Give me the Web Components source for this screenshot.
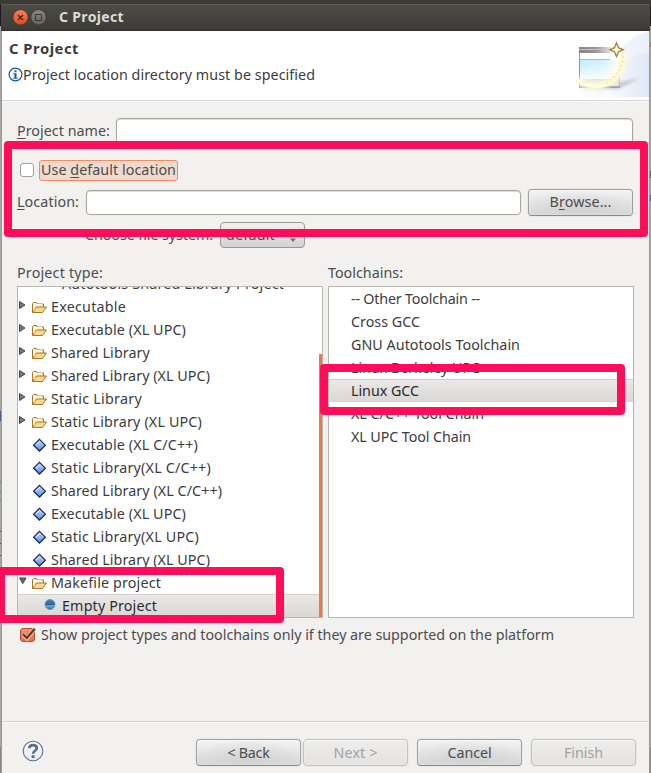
<!DOCTYPE html>
<html lang="en">
<head>
<meta charset="utf-8">
<title>C Project</title>
<style>
html,body{margin:0;padding:0}
body{width:651px;height:773px;overflow:hidden;background:#aaa9a7;font:14.3px/22px "Noto Sans","Open Sans",sans-serif;color:#4c4c4c}
</style>
</head>
<body>
<project-dialog></project-dialog>
<script>
const define = (name, html, after) => customElements.define(name, class extends HTMLElement {
  constructor(){ super(); this.attachShadow({mode:'open'}).innerHTML = html; }
  connectedCallback(){ if (after) after.call(this, this.shadowRoot); }
});

define('project-dialog', `
<style>
:host{display:block;position:relative;width:651px;height:773px;overflow:hidden;background:linear-gradient(#3c3b37 0 4px,#1c1b1a 4px 26px,#a5a4a2 26px 747px,#8b8986 747px)}
.window{display:flex;flex-direction:column;height:773px;margin:0 2px;background:#f2f1f0;box-shadow:0 0 0 1px #9b9a98}
.content{display:flex;flex-direction:column;height:620px;padding:17px 16px 0 15px;box-sizing:border-box}
.row{display:flex;align-items:center}
.name{height:26px;justify-content:space-between}
.default{height:22px;margin:15px 0 0 3px;gap:5px}
.loc{height:28px;margin-top:7px}
.loc text-field{margin:0 7px 0 7px}
.fs{height:26px;margin:6px 0 0 68px;gap:7px}
.titles{display:grid;grid-template-columns:311px 1fr;height:22px;margin-top:14px}
.lists{display:grid;grid-template-columns:306px 306px;gap:5px;height:332px;margin-top:2px}
.check{height:22px;margin:6px 0 0 3px;gap:6px}
.footer{display:flex;height:52px;border-top:1px solid #d7d5d3;box-shadow:inset 0 1px #fbfbfa;box-sizing:border-box;padding:17px 13px 0 20px}
.footer svg{margin:1px 152px 0 0;flex:none}
.edge{position:absolute;width:1px;opacity:.7}
</style>
<div class="window">
<title-bar><fit-text w="65">C Project</fit-text></title-bar>
<dialog-header><fit-text slot="title" w="70">C Project</fit-text><fit-text w="292">Project location directory must be specified</fit-text></dialog-header>
<div class="content">
 <div class="row name"><fit-text w="93"><u>P</u>roject name:</fit-text><text-field style="width:517px;height:26px"></text-field></div>
 <div class="row default"><check-box></check-box><focus-label><fit-text w="135">Use <u>d</u>efault location</fit-text></focus-label></div>
 <div class="row loc"><fit-text w="62"><u>L</u>ocation:</fit-text><text-field style="width:435px;height:25px"></text-field><push-button><fit-text w="62">B<u>r</u>owse...</fit-text></push-button></div>
 <div class="row fs"><fit-text w="128">Choose file system:</fit-text><drop-down><fit-text w="49">default</fit-text></drop-down></div>
 <div class="titles"><fit-text w="86">Project type:</fit-text><fit-text w="75">Toolchains:</fit-text></div>
 <div class="lists">
  <list-box class="tree" end scroll>
   <tree-item level="2" kind="none"><fit-text w="222">Autotools Shared Library Project</fit-text></tree-item>
   <tree-item kind="folder" arrow="right"><fit-text w="75">Executable</fit-text></tree-item>
   <tree-item kind="folder" arrow="right"><fit-text w="135">Executable (XL UPC)</fit-text></tree-item>
   <tree-item kind="folder" arrow="right"><fit-text w="99">Shared Library</fit-text></tree-item>
   <tree-item kind="folder" arrow="right"><fit-text w="159">Shared Library (XL UPC)</fit-text></tree-item>
   <tree-item kind="folder" arrow="right"><fit-text w="91">Static Library</fit-text></tree-item>
   <tree-item kind="folder" arrow="right"><fit-text w="151">Static Library (XL UPC)</fit-text></tree-item>
   <tree-item kind="diamond"><fit-text w="147">Executable (XL C/C++)</fit-text></tree-item>
   <tree-item kind="diamond"><fit-text w="160">Static Library(XL C/C++)</fit-text></tree-item>
   <tree-item kind="diamond"><fit-text w="171">Shared Library (XL C/C++)</fit-text></tree-item>
   <tree-item kind="diamond"><fit-text w="135">Executable (XL UPC)</fit-text></tree-item>
   <tree-item kind="diamond"><fit-text w="148">Static Library(XL UPC)</fit-text></tree-item>
   <tree-item kind="diamond"><fit-text w="159">Shared Library (XL UPC)</fit-text></tree-item>
   <tree-item kind="folder" arrow="down"><fit-text w="110">Makefile project</fit-text></tree-item>
   <tree-item level="2" kind="ball" selected><fit-text w="95">Empty Project</fit-text></tree-item>
  </list-box>
  <list-box>
   <list-item><fit-text w="129">-- Other Toolchain --</fit-text></list-item>
   <list-item><fit-text w="69">Cross GCC</fit-text></list-item>
   <list-item><fit-text w="169">GNU Autotools Toolchain</fit-text></list-item>
   <list-item><fit-text w="129">Linux Berkeley UPC</fit-text></list-item>
   <list-item selected><fit-text w="68">Linux GCC</fit-text></list-item>
   <list-item><fit-text w="133">XL C/C++ Tool Chain</fit-text></list-item>
   <list-item><fit-text w="120">XL UPC Tool Chain</fit-text></list-item>
  </list-box>
 </div>
 <div class="row check"><check-box checked></check-box><fit-text w="513">Show project types and toolchains only if they are supported on the platform</fit-text></div>
</div>
<div class="footer">
 <svg width="22" height="22" viewBox="0 0 22 22"><defs><linearGradient id="h" x2="0" y2="1"><stop offset="0" stop-color="#fff"/><stop offset="1" stop-color="#e5e8ed"/></linearGradient></defs><circle cx="11" cy="11" r="9.8" fill="url(#h)" stroke="#5c6e8f" stroke-width="1.1"/><path d="M7.2 8.3C7.3 3.9 14.8 4 14.8 8.2c0 2.5-3.7 2.7-3.7 5.6" fill="none" stroke="#5b6d8f" stroke-width="2.7"/><circle cx="11.1" cy="16.6" r="1.7" fill="#5b6d8f"/></svg>
 <push-button><fit-text w="42">&lt; Back</fit-text></push-button>
 <push-button disabled style="margin-left:2px"><fit-text w="44">Next &gt;</fit-text></push-button>
 <push-button style="margin-left:9px"><fit-text w="44">Cancel</fit-text></push-button>
 <push-button disabled style="margin-left:9px"><fit-text w="39">Finish</fit-text></push-button>
</div>
</div>
<i class="edge" style="left:0;top:411px;height:10px;background:#203e86"></i>
<i class="edge" style="left:0;top:481px;height:26px;background:repeating-linear-gradient(#55a0a0 0 3px,#b9a27b 3px 6px,#aaa 6px 9px)"></i>
<i class="edge" style="left:0;top:531px;height:36px;background:repeating-linear-gradient(#222 0 1px,#aaa 1px 7px,#ba8f4e 7px 8px,#aaa 8px 12px)"></i>
<i class="edge" style="left:650px;top:42px;height:5px;background:#a46d27"></i>
<i class="edge" style="left:650px;top:171px;height:7px;background:#633d18"></i>
<i class="edge" style="left:650px;top:195px;height:6px;background:#205a78"></i>
<call-out style="left:4px;top:141px;width:644px;height:96px"></call-out>
<call-out style="left:320px;top:364px;width:305px;height:51px"></call-out>
<call-out style="left:-3px;top:567px;width:287px;height:56px"></call-out>
`);

define('title-bar', `
<style>
:host{display:flex;align-items:center;height:31px;flex:none;box-sizing:border-box;padding:3px 0 0 10px;color:#dfdbd2;font-weight:700;font-size:14px;
background:linear-gradient(#3c3b37 0 4px,#5b5a51 4px 5px,#4d4b44 5px,#3d3c38 29px,#33322e 30px);margin:0 -1px}
svg{margin:0 11px 0 1px;flex:none}
</style>
<svg width="36" height="18" viewBox="0 0 36 18"><defs><linearGradient id="r" x2="0" y2="1"><stop offset="0" stop-color="#f58263"/><stop offset="1" stop-color="#dd4a1b"/></linearGradient><linearGradient id="g" x2="0" y2="1"><stop offset="0" stop-color="#8d8b83"/><stop offset="1" stop-color="#63625b"/></linearGradient></defs>
<circle cx="8.5" cy="9.3" r="7.6" fill="url(#r)" stroke="#33312d" stroke-width=".6"/><path d="M6 7l5 5M11 7l-5 5" stroke="#4a261b" stroke-width="1.4"/>
<circle cx="26.5" cy="9.3" r="7.6" fill="url(#g)" stroke="#33312d" stroke-width=".6"/><path d="M23.5 6.5h6v6h-6z" fill="none" stroke="#3a3935" stroke-width="1.1"/></svg>
<slot></slot>`);

define('dialog-header', `
<style>
:host{display:flex;justify-content:space-between;height:70px;flex:none;box-sizing:border-box;background:#fff;border-bottom:1px solid #d8d6d4;color:#3c3c3c;box-shadow:0 1px #fafafa}
.text{padding:6px 0 0 7px}
.title{font-weight:700;font-size:14.8px;height:22px}
.msg{display:flex;align-items:center;margin:5px 0 0 -1px;height:22px}
svg{display:block;flex:none}
</style>
<div class="text"><div class="title"><slot name="title"></slot></div>
<div class="msg"><svg width="15" height="16" viewBox="0 0 15 16"><circle cx="7.5" cy="7.5" r="6.4" fill="#fff" stroke="#145b94" stroke-width="1.2"/><path d="M6.5 3.2h2v2h-2zM5.3 6.2h3.2v4.6h1.2v1H5.3v-1h1.2V7.2H5.3z" fill="#145b94"/></svg><slot></slot></div></div>
<svg width="75" height="66" viewBox="0 0 75 66"><defs>
<linearGradient id="a"><stop offset="0" stop-color="#fff"/><stop offset="1" stop-color="#dde5f6"/></linearGradient>
<linearGradient id="b"><stop offset="0" stop-color="#858585"/><stop offset=".5" stop-color="#999"/><stop offset="1" stop-color="#fff"/></linearGradient>
<linearGradient id="c"><stop offset="0" stop-color="#c3edfe"/><stop offset=".6" stop-color="#d3f1fd"/><stop offset="1" stop-color="#fcfdf2"/></linearGradient>
<linearGradient id="e" x2="0" y2="1"><stop offset="0" stop-color="#fff" stop-opacity="0"/><stop offset="1" stop-color="#fff" stop-opacity=".9"/></linearGradient>
<filter id="f" x="-30%" y="-30%" width="160%" height="160%"><feGaussianBlur stdDeviation="1.4"/></filter></defs>
<path d="M75 0C50 8 40 22 35 35L0 55v11h75z" fill="url(#a)" opacity=".6"/><path d="M75 21C48 25 42 42 28 66h47z" fill="url(#a)" opacity=".8"/>
<path d="M5 58L44 58 66 47 47 51z" fill="#8d8293" opacity=".4" filter="url(#f)"/>
<path d="M5 17h41v39H5z" fill="#fff"/><path d="M5 16h36v6H5z" fill="url(#b)"/><path d="M5 18.5h26" stroke="#c4c4c4"/>
<path d="M5.5 22v34" stroke="#9a9795"/><path d="M45.5 30v26" stroke="#c3bdba"/><path d="M5 56h41" stroke="#96908f" stroke-width="1.6"/>
<path d="M6 28h38v20H6z" fill="url(#c)"/><path d="M6 31h38v17H6z" fill="url(#e)"/><path d="M6 28.5h30" stroke="#a9bbc1"/><path d="M6 48h39v7H6z" fill="#e8e5dc"/>
<path d="M3 48C12 58 34 58 44 43c5-7 6-15 4-23" fill="none" stroke="#fffbd8" stroke-width="7" filter="url(#f)"/>
<path d="M32 52C42 47 50 35 49 23" fill="none" stroke="#f8dfa4" stroke-width="2" stroke-dasharray="2 2.5" opacity=".85"/><path d="M3 49C12 57 26 57 33 54" fill="none" stroke="#ffffe0" stroke-width="2"/>
<path d="M42.5 12l2 4.7 4.8 2-4.8 2-2 4.8-2-4.8-4.8-2 4.8-2z" fill="#fffaf0" stroke="#a9802f" stroke-width="1.3"/></svg>`);

define('text-field', `<style>:host{display:block;box-sizing:border-box;flex:none;background:#fff;border:1px solid #aaa6a0;border-radius:4px;box-shadow:inset 0 1px #dfdcda,0 0 0 1px #edebe9}</style>`);

define('focus-label', `<style>:host{display:flex;align-items:center;height:21px;width:139px;box-sizing:border-box;padding-left:1px;background:#f1d9ce;border:1px solid #f08d63;border-radius:3px}</style><slot></slot>`);

define('check-box', `<style>:host{display:block;width:14px;height:14px;box-sizing:border-box;background:#fff;border:1px solid #a49f9a;border-radius:3px;flex:none}
svg{display:none}:host([checked]){width:15px;background:linear-gradient(#f4926f,#ec6e40);border-color:#a65536}:host([checked]) svg{display:block;margin:-2px 0 0 -1px;overflow:visible}</style>
<svg width="16" height="15" viewBox="0 0 16 15"><path d="M3 7.5l4 4L14.5 2" fill="none" stroke="#f7b79c" stroke-width="4"/><path d="M3 7.2l3.8 3.8L14.8 1.7" fill="none" stroke="#59382b" stroke-width="2.1"/></svg>`);

define('push-button', `<style>:host{display:flex;align-items:center;justify-content:center;box-sizing:border-box;width:105px;height:27px;flex:none;border:1px solid #a3a19f;border-bottom-color:#8b8987;border-radius:4px;background:radial-gradient(ellipse 58% 85% at 50% 85%,#d2d2d2,transparent),linear-gradient(#f3f3f3,#d8d8d8);box-shadow:inset 0 1px #f8f8f8,inset 0 0 2px #f2f2f2,0 0 0 1px #ebe9e8}
:host([disabled]){color:#a3a1a0;border-color:#c4c2c1;background:linear-gradient(#eeedec,#e4e3e2)}</style><slot></slot>`);

define('drop-down', `<style>:host{display:flex;align-items:center;justify-content:space-between;box-sizing:border-box;width:85px;height:26px;padding:0 7px 0 5px;border:1px solid #999795;border-radius:4px;background:linear-gradient(#f1f1f1,#d2d2d2)}svg{margin-top:10px}</style><slot></slot><svg width="8" height="5"><path d="M1 .5h6L4 4z" fill="#6a6a6a"/></svg>`);

define('list-box', `<style>:host{display:flex;flex-direction:column;box-sizing:border-box;height:332px;overflow:hidden;background:#fff;border:1px solid #b9b6b1;position:relative;color:#3c3c3c}
:host([end]){justify-content:flex-end}
.bar{display:none;position:absolute;right:0;top:67px;bottom:0;width:3px;background:#f07746}:host([scroll]) .bar{display:block}</style><slot></slot><div class="bar"></div>`);

const selectedRow = `:host([selected]){background:linear-gradient(#ebeae9,#d8d7d5);box-shadow:inset 0 1px #d2d0ce;color:#2b2b2b}`;
define('list-item', `<style>:host{display:flex;align-items:center;height:23px;flex:none;padding-left:22px}${selectedRow}</style><slot></slot>`);

const icons = {
  folder:`<path d="M1.5 13V4.5l1-1h3l1 1.5h6v3" fill="#fff3cf" stroke="#a97524"/><path d="M1.5 13.5l4-5.5h10l-4 5.5z" fill="#fbd98d" stroke="#a97524"/><path d="M3 11V5.5h8" stroke="#fffdf1" fill="none"/>`,
  diamond:`<defs><linearGradient id="q" x2="0" y2="1"><stop offset="0" stop-color="#d3e4ff"/><stop offset="1" stop-color="#4f80e8"/></linearGradient></defs><path d="M8.5 2.3l5.9 5.9-5.9 5.9-5.9-5.9z" fill="url(#q)" stroke="#14224f" stroke-width="1.2"/><path d="M8.5 4.5L5 8" stroke="#dbe9ff"/>`,
  ball:`<defs><linearGradient id="q" x2="0" y2="1"><stop offset="0" stop-color="#5084b9"/><stop offset=".45" stop-color="#316aa5"/><stop offset=".6" stop-color="#73aed8"/><stop offset="1" stop-color="#2c689f"/></linearGradient></defs><circle cx="8" cy="6.5" r="5" fill="url(#q)" stroke="#5c83aa" stroke-width=".7"/><path d="M4 6.7h8" stroke="#1e578d"/>`,
  none:''
};
define('tree-item', `<style>:host{display:flex;align-items:center;height:23px;flex:none}svg{display:block;flex:none}
.arrow{margin:-3px 3px 0 0}.icon{margin-right:4px}:host([level="2"]) .icon{margin:0 4px 0 11px}
${selectedRow}</style><svg class="arrow" width="10" height="10" viewBox="0 0 10 10"></svg><svg class="icon" width="16" height="16" viewBox="0 0 16 16"></svg><slot></slot>`, function(root){
  const arrow = this.getAttribute('arrow');
  root.querySelector('.icon').innerHTML = icons[this.getAttribute('kind')];
  if (arrow) root.querySelector('.arrow').innerHTML = arrow === 'right'
    ? '<path d="M1.5 1.5L7 5 1.5 8.5z" fill="#7a7a7a" stroke="#444"/>' : '<path d="M1.5 2h6.5L4.8 7.5z" fill="#666" stroke="#444"/>';
});

define('call-out', `<style>:host{display:block;position:absolute;box-sizing:border-box;border:8px solid #ff0d5a;border-radius:4px}</style>`);

/* Text run tracked to a given width. */
define('fit-text', `<style>:host{display:inline-block;white-space:pre;flex:none;justify-self:start}::slotted(u){text-decoration-thickness:1px;text-underline-offset:2px}</style><slot></slot>`, function(){
  const target = +this.getAttribute('w');
  const natural = this.getBoundingClientRect().width;
  this.style.letterSpacing = (target - natural) / this.textContent.length + 'px';
});
</script>
</body>
</html>
